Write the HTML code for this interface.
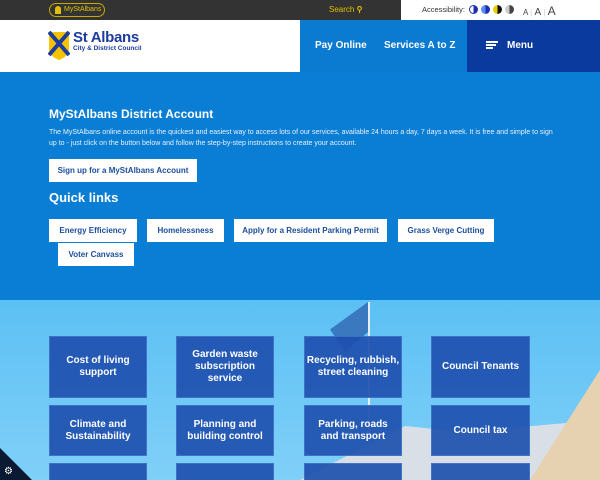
<!DOCTYPE html>
<html><head><meta charset="utf-8"><style>
*{margin:0;padding:0;box-sizing:border-box}
html,body{width:600px;height:480px;overflow:hidden}
body{font-family:"Liberation Sans",Arial,sans-serif;position:relative;background:#fff}
.abs{position:absolute}
.top{left:0;top:0;width:600px;height:20px;background:#333}
.btn{position:absolute;background:#fff;color:#1a4e9c;font-weight:bold;font-size:8px;display:flex;align-items:center;justify-content:center;height:23px}
.tile{position:absolute;background:rgba(30,80,175,0.92);color:#fff;font-weight:bold;font-size:10px;text-align:center;display:flex;align-items:center;justify-content:center;line-height:12px;border:1px solid rgba(80,130,210,.6)}
</style></head><body>
<div class="abs top"></div>
<div class="abs" style="left:49px;top:3px;width:56px;height:14px;border:1px solid #c9a800;border-radius:8px;color:#e0c000;font-size:7px;line-height:12px;padding-left:14px">MyStAlbans</div>
<div class="abs" style="left:55px;top:6px;width:6px;height:8px;background:#e0c000;border-radius:3px 3px 0 0"></div>
<div class="abs" style="left:329px;top:5px;color:#e0c000;font-size:8px">Search <b>&#9906;</b></div>
<div class="abs" style="left:401px;top:0;width:199px;height:20px;background:#fff"></div>
<div class="abs" style="left:422px;top:5px;font-size:7.5px;color:#333">Accessibility:</div>
<div class="abs" style="left:469px;top:5px;width:9px;height:9px;border-radius:50%;background:linear-gradient(90deg,#fff 50%,#1c2fb0 50%);border:1px solid #1c2fb0"></div>
<div class="abs" style="left:481px;top:5px;width:9px;height:9px;border-radius:50%;background:linear-gradient(90deg,#5b8bf0 50%,#1c2fb0 50%)"></div>
<div class="abs" style="left:493px;top:5px;width:9px;height:9px;border-radius:50%;background:linear-gradient(90deg,#e8d000 50%,#111 50%)"></div>
<div class="abs" style="left:505px;top:5px;width:9px;height:9px;border-radius:50%;background:linear-gradient(90deg,#ccc 50%,#444 50%)"></div>
<div class="abs" style="left:523px;top:4px;font-size:8px;color:#444">A <span style="color:#ccc">|</span> <span style="font-size:10px">A</span> <span style="color:#ccc">|</span> <span style="font-size:12px">A</span></div>
<div class="abs" style="left:300px;top:20px;width:167px;height:52px;background:#0a7bd0"></div>
<div class="abs" style="left:467px;top:20px;width:133px;height:52px;background:#0a3a9e"></div>
<svg class="abs" style="left:48px;top:31px" width="22" height="30" viewBox="0 0 22 30"><path d="M1 1H21V18Q21 25 11 29Q1 25 1 18Z" fill="#f5c400"/><path d="M1 1L21 24M21 1L1 24" stroke="#1c3c9e" stroke-width="4"/></svg>
<div class="abs" style="left:73px;top:29px;color:#1c3c9e;font-weight:bold;font-size:15px;letter-spacing:-.3px">St Albans</div>
<div class="abs" style="left:73px;top:45px;color:#1c3c9e;font-weight:bold;font-size:6.5px">City &amp; District Council</div>
<div class="abs" style="left:315px;top:40px;color:#fff;font-weight:bold;font-size:10px">Pay Online</div>
<div class="abs" style="left:384px;top:40px;color:#fff;font-weight:bold;font-size:10px">Services A to Z</div>
<div class="abs" style="left:486px;top:41px;width:12px;height:2px;background:#fff"></div>
<div class="abs" style="left:486px;top:44px;width:10px;height:2px;background:#fff"></div>
<div class="abs" style="left:486px;top:47px;width:7px;height:2px;background:#fff"></div>
<div class="abs" style="left:507px;top:40px;color:#fff;font-weight:bold;font-size:10px">Menu</div>
<div class="abs" style="left:0;top:72px;width:600px;height:228px;background:#0a7ed5"></div>
<div class="abs" style="left:49px;top:107px;color:#fff;font-weight:bold;font-size:12px">MyStAlbans District Account</div>
<div class="abs" style="left:49px;top:128px;color:#e8f1fb;font-size:7px;line-height:10.5px;width:510px">The MyStAlbans online account is the quickest and easiest way to access lots of our services, available 24 hours a day, 7 days a week. It is free and simple to sign up to - just click on the button below and follow the step-by-step instructions to create your account.</div>
<div class="btn" style="left:49px;top:159px;width:148px">Sign up for a MyStAlbans Account</div>
<div class="abs" style="left:49px;top:190px;color:#fff;font-weight:bold;font-size:13px">Quick links</div>
<div class="btn" style="left:49px;top:219px;width:88px">Energy Efficiency</div>
<div class="btn" style="left:147px;top:219px;width:77px">Homelessness</div>
<div class="btn" style="left:234px;top:219px;width:153px">Apply for a Resident Parking Permit</div>
<div class="btn" style="left:398px;top:219px;width:96px">Grass Verge Cutting</div>
<div class="btn" style="left:58px;top:243px;width:76px">Voter Canvass</div>
<div class="abs" style="left:0;top:300px;width:600px;height:180px;background:linear-gradient(180deg,#5cc0f4,#80d0f8)"></div>
<div class="abs" style="left:368px;top:302px;width:2px;height:178px;background:#e8eef4"></div>
<div class="abs" style="left:330px;top:302px;width:38px;height:50px;background:#3a78c0;clip-path:polygon(100% 0,0 55%,40% 100%,100% 60%)"></div>
<div class="abs" style="left:300px;top:420px;width:300px;height:60px;background:#d8dfe6;clip-path:polygon(0 100%,35% 10%,55% 20%,100% 0,100% 100%)"></div>
<div class="abs" style="left:530px;top:370px;width:70px;height:110px;background:#e6d2b0;clip-path:polygon(100% 0,100% 100%,0 100%)"></div>
<div class="tile" style="left:49px;top:336px;width:98px;height:62px">Cost of living<br>support</div>
<div class="tile" style="left:176px;top:336px;width:98px;height:62px">Garden waste<br>subscription<br>service</div>
<div class="tile" style="left:304px;top:336px;width:98px;height:62px">Recycling, rubbish,<br>street cleaning</div>
<div class="tile" style="left:431px;top:336px;width:99px;height:62px">Council Tenants</div>
<div class="tile" style="left:49px;top:405px;width:98px;height:51px">Climate and<br>Sustainability</div>
<div class="tile" style="left:176px;top:405px;width:98px;height:51px">Planning and<br>building control</div>
<div class="tile" style="left:304px;top:405px;width:98px;height:51px">Parking, roads<br>and transport</div>
<div class="tile" style="left:431px;top:405px;width:99px;height:51px">Council tax</div>
<div class="tile" style="left:49px;top:463px;width:98px;height:17px;border-bottom:none"></div>
<div class="tile" style="left:176px;top:463px;width:98px;height:17px;border-bottom:none"></div>
<div class="tile" style="left:304px;top:463px;width:98px;height:17px;border-bottom:none"></div>
<div class="tile" style="left:431px;top:463px;width:99px;height:17px;border-bottom:none"></div>
<div class="abs" style="left:0;top:448px;width:32px;height:32px;background:#0b1a33;clip-path:polygon(0 0,100% 100%,0 100%)"></div>
<div class="abs" style="left:4px;top:466px;color:#fff;font-size:10px">&#9881;</div>
</body></html>
